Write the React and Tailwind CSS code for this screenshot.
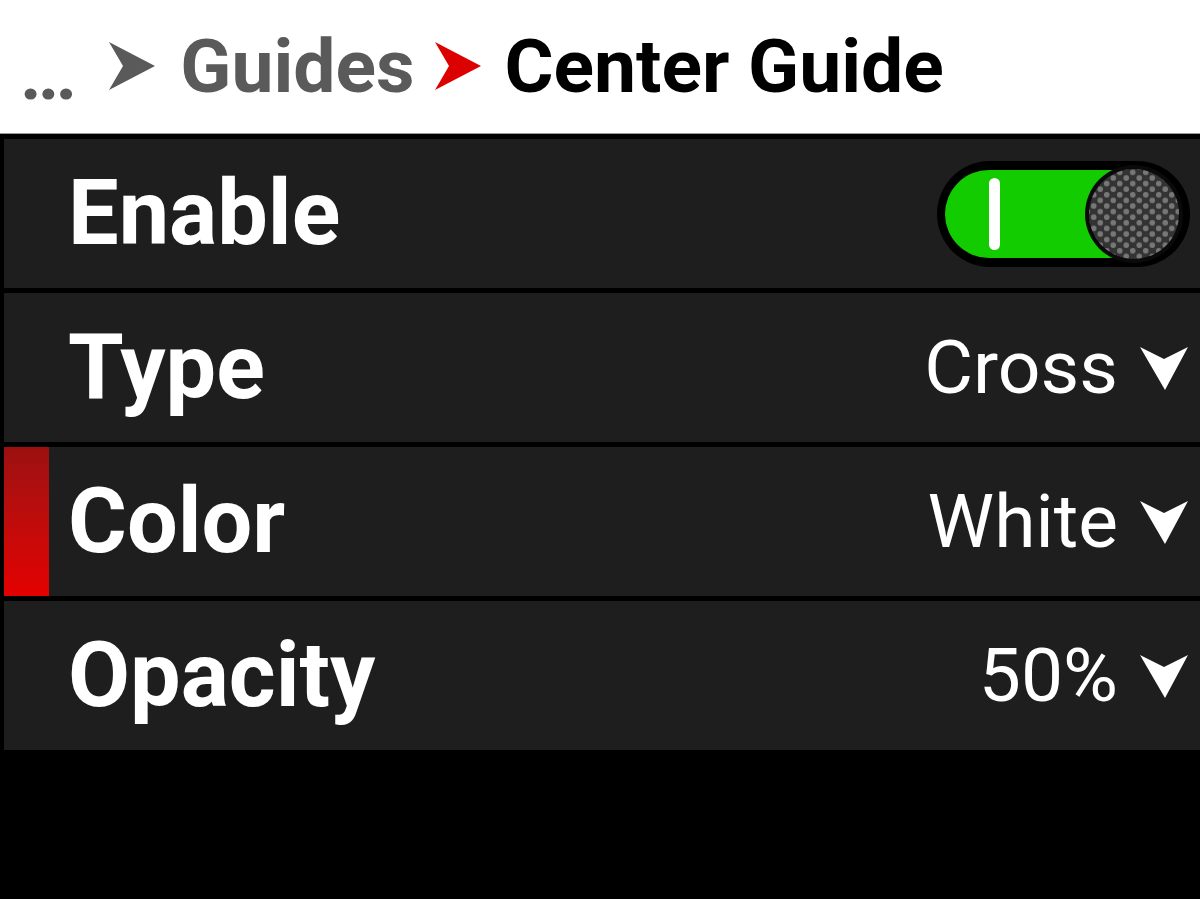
const ROWS = [
  { label: "Enable", toggle: true },
  { label: "Type", value: "Cross" },
  { label: "Color", value: "White", active: true },
  { label: "Opacity", value: "50%" },
];

// filled arrowhead used in the breadcrumb
function Arrow({ color }) {
  return (
    <svg width="46" height="48" viewBox="0 0 46 48" className="shrink-0">
      <polygon points="0,0 46,24 0,48 14,24" fill={color} />
    </svg>
  );
}

function DownArrow() {
  return (
    <svg width="48" height="46" viewBox="0 0 48 46" className="shrink-0">
      <polygon points="0,2 24,14 48,2 25,45" fill="#ffffff" />
    </svg>
  );
}

function Toggle() {
  return (
    <div className="relative w-[253px] h-[106px] rounded-full bg-black">
      <div className="absolute left-[8px] top-[9px] w-[190px] h-[88px] rounded-l-full bg-[#12cc00]" />
      <div className="absolute left-[52px] top-[17px] w-[11px] h-[72px] rounded-full bg-white" />
      <svg width="100" height="100" viewBox="0 0 100 100" className="absolute left-[147px] top-[3px]">
        <defs>
          <pattern id="dots" width="13" height="11.2" patternUnits="userSpaceOnUse">
            <circle cx="3.25" cy="2.8" r="2.8" fill="#777777" />
            <circle cx="9.75" cy="8.4" r="2.8" fill="#777777" />
          </pattern>
        </defs>
        <circle cx="50" cy="50" r="49" fill="#0a0a0a" />
        <circle cx="50" cy="50" r="45" fill="#333333" />
        <circle cx="50" cy="50" r="45" fill="url(#dots)" />
      </svg>
    </div>
  );
}

function Row({ row }) {
  return (
    <div className="h-[149px] bg-[#1e1e1e] flex items-stretch">
      <div
        className={`w-[45px] shrink-0 ${row.active ? "bg-gradient-to-b from-[#9c1010] to-[#e40000]" : ""}`}
      />
      <div className="flex-1 flex items-center justify-between pl-[19px] pr-[10px]">
        <span className="text-[90px] font-bold text-white leading-none">{row.label}</span>
        {row.toggle ? (
          <Toggle />
        ) : (
          <div className="flex items-center gap-[22px] pr-[2px]">
            <span className="text-[75px] text-white leading-none">{row.value}</span>
            <DownArrow />
          </div>
        )}
      </div>
    </div>
  );
}

export default function App() {
  return (
    <div className="w-[1200px] h-[899px] bg-black overflow-hidden font-['Roboto',_'Liberation_Sans',_sans-serif]">
      <div className="h-[134px] bg-white flex items-center pl-[20px] border-b border-[#9a9a9a]">
        <span className="text-[75px] font-bold text-[#5a5a5a] leading-none tracking-[-4px] mt-[14px]">...</span>
        <div className="ml-[36px] mt-[-2px]">
          <Arrow color="#5a5a5a" />
        </div>
        <span className="ml-[25px] text-[75px] font-bold text-[#5a5a5a] leading-none">Guides</span>
        <div className="ml-[20px] mt-[-2px]">
          <Arrow color="#dd0000" />
        </div>
        <span className="ml-[24px] text-[75px] font-bold text-black leading-none">Center Guide</span>
      </div>
      <div className="pt-[5px] pl-[4px] flex flex-col gap-[5px]">
        {ROWS.map((row) => (
          <Row key={row.label} row={row} />
        ))}
      </div>
    </div>
  );
}
